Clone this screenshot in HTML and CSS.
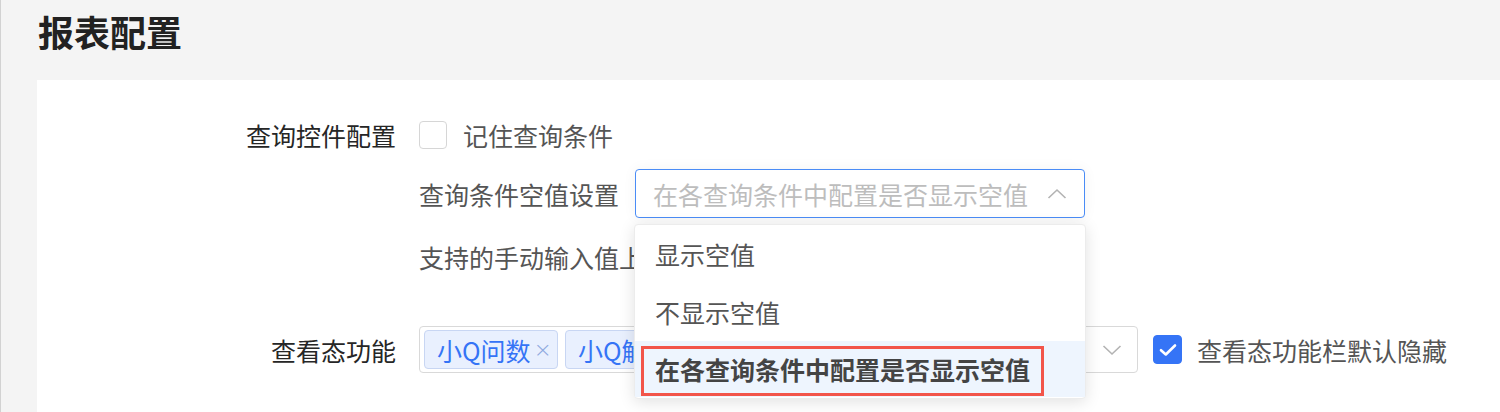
FILE: index.html
```html
<!DOCTYPE html>
<html lang="zh-CN">
<head>
<meta charset="utf-8">
<title>报表配置</title>
<link rel="stylesheet" href="styles.css">
</head>
<body>
<div class="page">
  <header class="header"><h1 class="title">报表配置</h1></header>
  <section class="panel">
    <div class="row row-1">
      <div class="label">查询控件配置</div>
      <div class="control">
        <span class="checkbox"></span>
        <span class="text">记住查询条件</span>
      </div>
    </div>
    <div class="row row-2">
      <div class="label"></div>
      <div class="control">
        <span class="text">查询条件空值设置</span>
        <div class="select-wrap">
          <div class="select open">
            <span class="placeholder">在各查询条件中配置是否显示空值</span>
            <svg class="chev" width="20" height="12" viewBox="0 0 20 12"><path d="M1.5 10 L10 2 L18.5 10" fill="none" stroke="#b3b3b3" stroke-width="1.6"/></svg>
          </div>
          <ul class="dropdown">
            <li class="item">显示空值</li>
            <li class="item">不显示空值</li>
            <li class="item active">在各查询条件中配置是否显示空值</li>
          </ul>
          <div class="annot"></div>
        </div>
      </div>
    </div>
    <div class="row row-3">
      <div class="label"></div>
      <div class="control">
        <span class="text">支持的手动输入值上限</span>
      </div>
    </div>
    <div class="row row-4">
      <div class="label">查看态功能</div>
      <div class="control">
        <div class="multi">
          <span class="tag">小Q问数<span class="x">×</span></span>
          <span class="tag">小Q解读<span class="x">×</span></span>
          <svg class="chev down" width="20" height="12" viewBox="0 0 20 12"><path d="M1.5 2 L10 10 L18.5 2" fill="none" stroke="#b3b3b3" stroke-width="1.6"/></svg>
        </div>
        <span class="checkbox checked"><svg width="18" height="14" viewBox="0 0 18 14"><path d="M2 7.2 L6.8 11.5 L16 2.5" fill="none" stroke="#fff" stroke-width="2.6" stroke-linecap="round" stroke-linejoin="round"/></svg></span>
        <span class="text">查看态功能栏默认隐藏</span>
      </div>
    </div>
  </section>
</div>
</body>
</html>
```

FILE: styles.css
```css
* { box-sizing: border-box; }
html, body { margin: 0; padding: 0; }
body {
  width: 1500px;
  height: 412px;
  overflow: hidden;
  background: #f4f4f4;
  font-family: "Noto Sans CJK SC", "Noto Sans", sans-serif;
}
.page {
  height: 412px;
  border-left: 1px solid #d2d2d2;
  display: flex;
  flex-direction: column;
}
.header {
  height: 80px;
  padding: 9px 0 0 37px;
}
.title {
  margin: 0;
  font-size: 36px;
  line-height: 44px;
  font-weight: 700;
  color: #222;
}
.panel {
  flex: 1;
  margin-left: 36px;
  background: #fff;
  padding-top: 41px;
}
.row {
  display: grid;
  grid-template-columns: 359px 1fr;
  column-gap: 23px;
  align-items: center;
}
.label {
  text-align: right;
  font-size: 25px;
  line-height: 28px;
  color: #262626;
}
.control {
  display: flex;
  align-items: center;
}
.text {
  font-size: 25px;
  line-height: 28px;
  color: #555;
  white-space: nowrap;
}
.row-1 { height: 28px; }
.row-1 .text { margin-left: 16px; }
.row-2 { margin-top: 20px; height: 49px; }
.row-2 .text { margin-right: 16px; }
.row-3 { margin-top: 21px; height: 36px; }
.row-4 { margin-top: 51px; height: 47px; }

.checkbox {
  width: 28px;
  height: 28px;
  border: 1px solid #d6d6d6;
  border-radius: 4px;
  background: #fff;
  display: inline-flex;
  align-items: center;
  justify-content: center;
  flex: none;
}
.checkbox.checked {
  width: 29px;
  height: 29px;
  background: #3574f6;
  border-color: #3574f6;
  margin-left: 15px;
}
.row-4 .text { margin-left: 15px; }

.select-wrap { position: relative; }
.select {
  width: 450px;
  height: 49px;
  border: 1px solid #4a8cf6;
  border-radius: 4px;
  display: flex;
  align-items: center;
  justify-content: space-between;
  padding: 0 17px 0 17px;
  background: #fff;
  box-shadow: 0 0 14px rgba(0,0,0,0.05);
}
.placeholder {
  font-size: 25px;
  color: #bdbdbd;
  white-space: nowrap;
}
.chev { flex: none; }
.dropdown {
  position: absolute;
  left: -1px;
  top: 55px;
  width: 452px;
  margin: 0;
  padding: 0 0 1px;
  list-style: none;
  background: #fff;
  border-radius: 4px;
  border: 1px solid #ececec;
  box-shadow: 0 3px 16px rgba(0,0,0,0.12);
  z-index: 5;
}
.item {
  height: 58px;
  display: flex;
  align-items: center;
  padding-left: 20px;
  font-size: 25px;
  color: #555;
  white-space: nowrap;
}
.item.active {
  height: 56px;
  background: #eef5fe;
  font-weight: 700;
  color: #444;
}
.annot {
  position: absolute;
  left: 6px;
  top: 177px;
  width: 403px;
  height: 50px;
  border: 3px solid #f2554a;
  z-index: 6;
}

.multi {
  width: 719px;
  height: 47px;
  border: 1px solid #d9d9d9;
  border-radius: 4px;
  display: flex;
  align-items: center;
  padding: 0 15px 0 4px;
  gap: 7px;
}
.tag {
  height: 39px;
  display: inline-flex;
  align-items: center;
  padding: 0 5px 0 12px;
  background: #e9f0fe;
  border: 1px solid #c8d6f3;
  border-radius: 4px;
  font-size: 25px;
  color: #3574f6;
  white-space: nowrap;
}
.tag .x {
  margin-left: 3px;
  font-size: 22px;
  color: #8fa9df;
  font-family: "DejaVu Sans", sans-serif;
  font-weight: 300;
}
.multi .down { margin-left: auto; }
```
